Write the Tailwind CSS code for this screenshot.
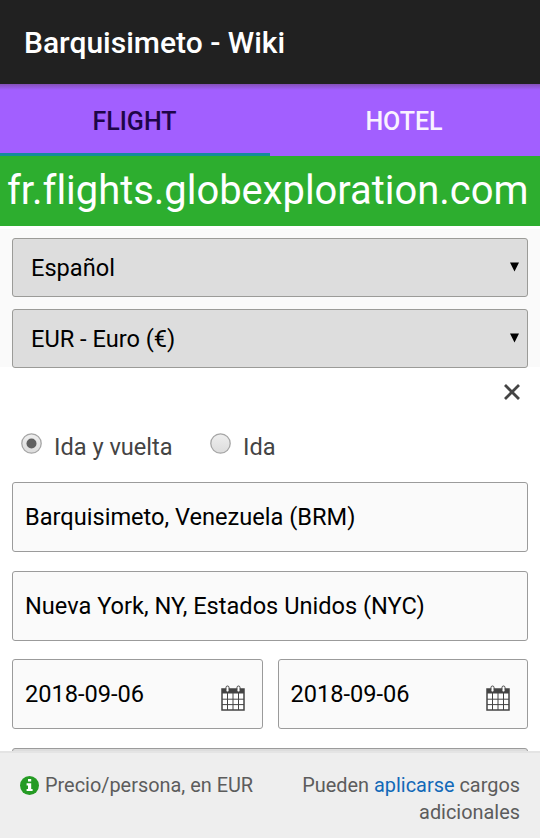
<!DOCTYPE html>
<html lang="es">
<head>
  <meta charset="UTF-8">
  <meta name="viewport" content="width=device-width, initial-scale=1.0">
  <title>Barquisimeto - Wiki</title>
  <script src="https://cdn.jsdelivr.net/npm/@tailwindcss/browser@4"></script>
</head>
<body class="flex h-[838px] w-[540px] flex-col overflow-hidden bg-white font-['Roboto',sans-serif] text-black">
  <!-- App bar -->
  <header class="flex h-[84px] shrink-0 items-center bg-[#212121] pt-0.5 pl-6">
    <h1 class="text-[30px] leading-none font-medium whitespace-nowrap text-white">Barquisimeto - Wiki</h1>
  </header>

  <!-- Tabs -->
  <nav class="flex h-[72px] shrink-0 bg-linear-to-b from-[#8450b8] to-[#a25fff] to-[6px] text-[25px] font-medium">
    <div class="flex w-1/2 items-center justify-center border-b-[3px] border-[#158a9c] pt-1.5 pr-px text-[#1e0548]">FLIGHT</div>
    <div class="flex w-1/2 items-center justify-center pt-[3px] pr-0.5 text-[#faf3ff]">HOTEL</div>
  </nav>

  <!-- Banner -->
  <div class="flex h-[70px] shrink-0 items-center bg-[#2dae2f] pl-[7px]">
    <span class="text-[39.9px] leading-none whitespace-nowrap text-white [font-variant-ligatures:none]">fr.flights.globexploration.com</span>
  </div>

  <main class="min-h-0 flex-1 overflow-hidden">
    <!-- Language and currency -->
    <div class="flex h-[141px] flex-col gap-3 border-t-[3px] border-white bg-[#fafafa] px-3 pt-[9px] text-[23.6px]">
      <div class="flex h-[59px] shrink-0 items-center justify-between rounded-[3px] border-[1.5px] border-[#9b9b98] bg-[#dddddd] pr-2 pl-[18px]">
        <span class="pt-0.5">Español</span>
        <svg class="mb-px h-[10px] w-[9px]" viewBox="0 0 9 10"><path d="M0 0.5h9L4.5 9.5z"/></svg>
      </div>
      <div class="flex h-[58.5px] shrink-0 items-center justify-between rounded-[3px] border-[1.5px] border-[#9b9b98] bg-[#dddddd] pr-2 pl-[18px]">
        <span class="pt-0.5">EUR - Euro (€)</span>
        <svg class="mb-px h-[10px] w-[9px]" viewBox="0 0 9 10"><path d="M0 0.5h9L4.5 9.5z"/></svg>
      </div>
    </div>

    <!-- Close -->
    <div class="flex h-[49px] items-center justify-end pr-5">
      <svg class="size-4" viewBox="0 0 16 16" fill="none" stroke="#444" stroke-width="2.8"><path d="M1 1l14 14M15 1L1 15"/></svg>
    </div>

    <!-- Trip type -->
    <div class="flex h-[66px] items-center pb-0.5 pl-[21px] text-[23.6px] text-[#444]">
      <svg class="mr-3 mb-2.5 size-[21px]" viewBox="0 0 21 21">
        <defs><linearGradient id="radio" x1="0" y1="0" x2="0" y2="1"><stop offset="0" stop-color="#efefef"/><stop offset="1" stop-color="#dcdcdc"/></linearGradient></defs>
        <circle cx="10.5" cy="10.5" r="9.7" fill="url(#radio)" stroke="#a6a6a6" stroke-width="1.3"/>
        <circle cx="10.5" cy="10.5" r="5" fill="#606060"/>
      </svg>
      <span class="w-[156px]">Ida y vuelta</span>
      <svg class="mr-3 mb-2.5 size-[21px]" viewBox="0 0 21 21">
        <circle cx="10.5" cy="10.5" r="9.7" fill="url(#radio)" stroke="#a6a6a6" stroke-width="1.3"/>
      </svg>
      <span>Ida</span>
    </div>

    <!-- Search fields -->
    <div class="flex flex-col gap-[18.5px] px-3 text-[23.6px]">
      <div class="flex h-[70px] items-center rounded-[3px] border-[1.5px] border-[#9b9b9b] bg-[#fafafa] pt-0.5 pl-3">Barquisimeto, Venezuela (BRM)</div>
      <div class="flex h-[70px] items-center rounded-[3px] border-[1.5px] border-[#9b9b9b] bg-[#fafafa] pt-0.5 pl-3">Nueva York, NY, Estados Unidos (NYC)</div>
      <div class="grid grid-cols-2 gap-[15px]">
        <div class="flex h-[70px] items-center justify-between rounded-[3px] border-[1.5px] border-[#9b9b9b] bg-[#fafafa] pr-[17px] pl-3">
          <span class="pt-0.5">2018-09-06</span>
          <svg class="mt-2 h-[26px] w-[24px]" viewBox="0 0 24 26" fill="none" stroke="#444">
            <path d="M1 4h22v21H1z" fill="#fff" stroke-width="1.5"/>
            <path d="M1 4h22v4.5H1z" fill="#444" stroke="none"/>
            <path d="M1 14.2h22M1 19.6h22M6.5 8v17M12 8v17M17.5 8v17" stroke-width="1"/>
            <rect x="5" y="1" width="3" height="6" rx="1.5" fill="#fff"/>
            <rect x="16" y="1" width="3" height="6" rx="1.5" fill="#fff"/>
          </svg>
        </div>
        <div class="flex h-[70px] items-center justify-between rounded-[3px] border-[1.5px] border-[#9b9b9b] bg-[#fafafa] pr-[17px] pl-3">
          <span class="pt-0.5">2018-09-06</span>
          <svg class="mt-2 h-[26px] w-[24px]" viewBox="0 0 24 26" fill="none" stroke="#444">
            <path d="M1 4h22v21H1z" fill="#fff" stroke-width="1.5"/>
            <path d="M1 4h22v4.5H1z" fill="#444" stroke="none"/>
            <path d="M1 14.2h22M1 19.6h22M6.5 8v17M12 8v17M17.5 8v17" stroke-width="1"/>
            <rect x="5" y="1" width="3" height="6" rx="1.5" fill="#fff"/>
            <rect x="16" y="1" width="3" height="6" rx="1.5" fill="#fff"/>
          </svg>
        </div>
      </div>
      <div class="h-[59px] rounded-[3px] border-[1.5px] border-[#9b9b9b] bg-[#dddddd]"></div>
    </div>
  </main>

  <!-- Price note -->
  <footer class="flex h-[87px] shrink-0 justify-between border-t-2 border-[#e4e4e4] bg-[#eeeeee] px-5 pt-[19px] text-[19.9px] leading-[27px] text-[#5c5c5c]">
    <div class="flex items-start gap-[6px]">
      <svg class="mt-[4px] size-[19px]" viewBox="0 0 19 19">
        <circle cx="9.5" cy="9.5" r="9.5" fill="#259b24"/>
        <path d="M8 3h3.2v2.6H8zM6.6 7.3h4.6v5.6h1.4v2.2H6.6v-2.2H8V9.4H6.6z" fill="#fff"/>
      </svg>
      <span>Precio/persona, en EUR</span>
    </div>
    <p class="w-[230px] text-right">Pueden <a class="text-[#1269b8]">aplicarse</a> cargos adicionales</p>
  </footer>
</body>
</html>
